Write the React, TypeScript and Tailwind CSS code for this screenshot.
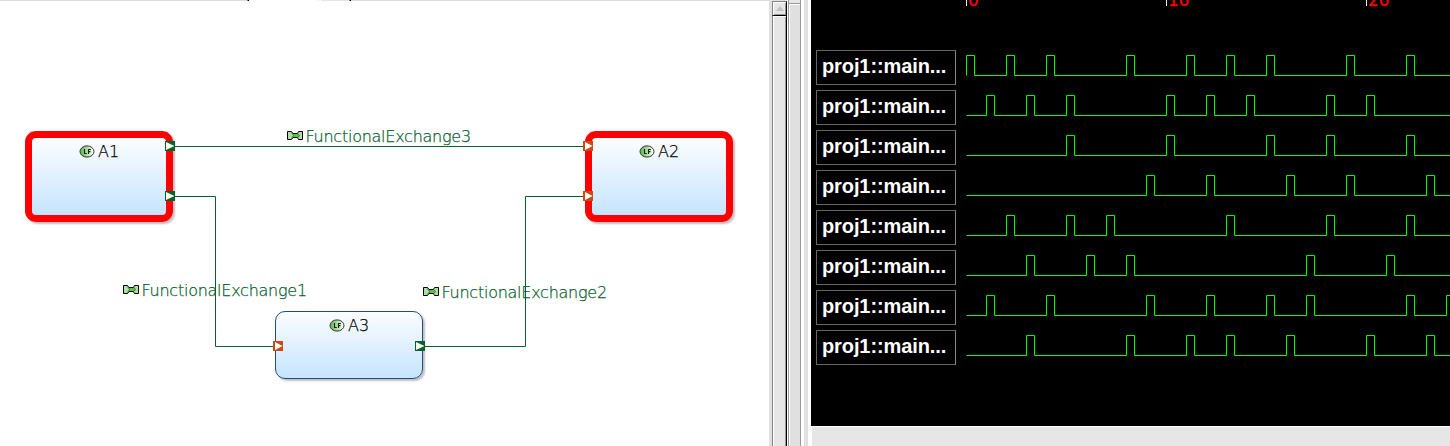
import React from "react";

const TICK = 20;

const signals: number[][] = [
  [0, 2, 4, 8, 11, 13, 15, 19, 22],
  [1, 3, 5, 10, 12, 14, 18, 20],
  [5, 10, 15, 18, 22],
  [9, 12, 16, 19, 23],
  [2, 5, 7, 13, 18, 22],
  [3, 6, 8, 17, 21],
  [1, 4, 9, 12, 15, 17, 22, 24],
  [3, 8, 11, 13, 16, 20, 23],
];

function wavePath(pulses: number[]) {
  let d = "M0.5 25.5";
  for (const p of pulses) {
    const x = p * TICK + 0.5;
    d += `H${x}V5.5H${x + 8}V25.5`;
  }
  return d + "H490";
}

function FunctionIcon() {
  return (
    <svg width="16" height="13" viewBox="0 0 16 13">
      <defs>
        <linearGradient id="fn" x1="0" x2="1" y1="0" y2="0">
          <stop offset="0.1" stopColor="#6cbb58" />
          <stop offset="0.9" stopColor="#f1faee" />
        </linearGradient>
      </defs>
      <ellipse cx="8" cy="6.5" rx="7" ry="5.6" fill="url(#fn)" stroke="#2b3428" strokeWidth="1" />
      <path d="M5.5 4V8.5H7.8M9.5 9V4.5H11.9M9.5 6.6H11.5" fill="none" stroke="#1a1f18" strokeWidth="1.1" />
    </svg>
  );
}

function ExchangeIcon() {
  return (
    <svg width="16" height="9" viewBox="0 0 16 9">
      <path d="M0.5 0.5H4.5L6 2.5H10.5L11.5 0.5H15.5V8.5H11.5L10.5 6.5H6L4.5 8.5H0.5Z" fill="#b0dea8" />
      <path d="M5 2.5H11L12.5 4.5L11 6.5H5L6.5 4.5Z" fill="#5cc340" />
      <path
        d="M0.5 0.5H4.5L6 2.5H10.5L11.5 0.5H15.5V8.5H11.5L10.5 6.5H6L4.5 8.5H0.5Z"
        fill="none"
        stroke="#000"
      />
      <path d="M4.5 1.5L6.5 4.5L4.5 7.5M11 2.5L12.5 4.5L11 6.5" fill="none" stroke="#2a4f24" strokeWidth="0.7" />
    </svg>
  );
}

function Port({ kind, place }: { kind: "in" | "out"; place: string }) {
  return (
    <svg className={`absolute ${place}`} width="10" height="10" viewBox="0 0 10 10">
      <rect width="10" height="10" fill={kind === "in" ? "#cb4a12" : "#09602f"} />
      {kind === "in" ? (
        <path d="M2 1V9L9.5 5Z" fill="#fff" />
      ) : (
        <path d="M1 1V9L9 5.3V4.7Z" fill="#f8ffe9" />
      )}
    </svg>
  );
}

function Node({ name, place }: { name: string; place: string }) {
  return (
    <div
      className={`absolute flex w-[148px] items-start justify-center bg-linear-to-b from-[#fcfdff] to-[#c6e4ff] shadow-[2px_2px_2px_rgba(70,70,90,0.35)] ${place}`}
    >
      <div className="flex h-[26px] items-center gap-[3px] text-[16px] font-extralight text-black [-webkit-text-stroke:0.25px_black]">
        <FunctionIcon />
        <span className="pt-[2px] leading-[18px]">{name}</span>
      </div>
    </div>
  );
}

function ExchangeLabel({ name, place }: { name: string; place: string }) {
  return (
    <div className={`absolute flex h-[20px] items-start gap-[2.5px] text-[16px] font-extralight text-[#09602f] [-webkit-text-stroke:0.25px_#09602f] ${place}`}>
      <div className="pt-[5px]">
        <ExchangeIcon />
      </div>
      <span className="whitespace-nowrap pt-px leading-[20px] tracking-[-0.25px]">{name}</span>
    </div>
  );
}

function Diagram() {
  return (
    <div className="relative h-[446px] w-[769px] shrink-0 overflow-hidden bg-white font-['DejaVu_Sans',sans-serif]">
      <div className="flex h-px">
        <div className="w-[247px] bg-[#dedede]" />
        <div className="w-px bg-[#777]" />
        <div className="w-px bg-black" />
        <div className="w-[69px] bg-white" />
        <div className="w-px bg-[#dedede]" />
        <div className="w-[2px] bg-white" />
        <div className="w-[28px] bg-[#e6e6e6]" />
        <div className="w-px bg-[#777]" />
        <div className="w-px bg-black" />
        <div className="flex-1 bg-[#dedede]" />
      </div>
      <Node name="A1" place="left-[25px] top-[131px] h-[91px] rounded-[11px] border-[7px] border-[#ff0000]" />
      <Node name="A2" place="left-[585px] top-[131px] h-[91px] rounded-[11px] border-[7px] border-[#ff0000]" />
      <Node name="A3" place="left-[275px] top-[311px] h-[68px] rounded-[10px] border border-[#234b7c]" />
      <svg className="absolute left-0 top-0" width="769" height="446" viewBox="0 0 769 446">
        <path d="M175 146.5H584M175 196.5H215.5V346.5H274M425 346.5H525.5V196.5H584" fill="none" stroke="#09602f" />
      </svg>
      <Port kind="out" place="left-[165px] top-[141px]" />
      <Port kind="out" place="left-[165px] top-[191px]" />
      <Port kind="in" place="left-[583px] top-[141px]" />
      <Port kind="in" place="left-[583px] top-[191px]" />
      <Port kind="in" place="left-[273px] top-[341px]" />
      <Port kind="out" place="left-[415px] top-[341px]" />
      <ExchangeLabel name="FunctionalExchange3" place="left-[287px] top-[126px]" />
      <ExchangeLabel name="FunctionalExchange1" place="left-[123px] top-[280px]" />
      <ExchangeLabel name="FunctionalExchange2" place="left-[423px] top-[282px]" />
    </div>
  );
}

function Scrollbars() {
  return (
    <div className="flex h-[446px] w-[42px] shrink-0 bg-white">
      <div className="w-[3px] bg-[#e0e0e0]" />
      <div className="flex w-[15px] flex-col bg-[#e0e0e0] pt-px">
        <div className="flex h-[15px] items-center justify-center border-b border-l border-r border-t border-b-black border-l-[#858585] border-r-black border-t-[#858585] bg-[#e6e6e6] shadow-[inset_1px_1px_0_#fff,inset_-1px_-1px_0_#999]">
          <svg width="8" height="5" viewBox="0 0 8 5">
            <path d="M4 0L8 5H0Z" fill="#c3c3c3" />
          </svg>
        </div>
        <div className="flex-1 border-l border-r border-l-[#858585] border-r-black bg-[#e6e6e6] shadow-[inset_1px_1px_0_#fff,inset_-1px_0_0_#999]" />
      </div>
      <div className="w-px bg-white" />
      <div className="flex w-[13px] flex-col border-l border-r border-l-[#999] border-r-[#999] bg-[#e0e0e0]">
        <div className="h-[4px] border-b border-[#999] bg-[#e6e6e6]" />
        <div className="flex-1 shadow-[inset_1px_1px_0_#fff]" />
      </div>
      <div className="w-[3px] bg-white" />
      <div className="w-[4px] bg-[#e2e2e2]" />
    </div>
  );
}

function AxisMark({ value }: { value: number }) {
  return (
    <div className="flex h-[6px] w-[200px] shrink-0 items-end">
      <div className="h-full w-px bg-white" />
      <span className="ml-px font-['DejaVu_Sans',sans-serif] text-[17px] leading-[12px] text-[#ff0000] [-webkit-text-stroke:0.3px_#ff0000]">
        {value}
      </span>
    </div>
  );
}

function Waveforms() {
  return (
    <div className="flex h-[446px] min-w-0 flex-1 flex-col">
      <div className="flex h-[426px] flex-col overflow-hidden bg-black">
        <div className="flex h-[50px] shrink-0 items-start overflow-hidden pl-[155px]">
          <AxisMark value={0} />
          <AxisMark value={10} />
          <AxisMark value={20} />
        </div>
        <div className="flex flex-col gap-[5px] pl-[5px]">
          {signals.map((pulses, i) => (
            <div key={i} className="flex h-[35px] gap-[10px]">
              <div className="flex w-[140px] shrink-0 items-center overflow-hidden whitespace-nowrap border border-[#666] border-r-[#888] pb-[4px] pl-[5px] font-['Liberation_Sans',sans-serif] text-[20px] font-bold leading-none tracking-[-0.1px] text-white">
                proj1::main...
              </div>
              <svg className="shrink-0" width="484" height="35" viewBox="0 0 484 35">
                <path d={wavePath(pulses)} fill="none" stroke="#00ff00" />
              </svg>
            </div>
          ))}
        </div>
      </div>
      <div className="flex-1 border-l border-t border-white bg-[#e6e6e6]" />
    </div>
  );
}

export default function App() {
  return (
    <div className="flex h-[446px] w-[1450px] overflow-hidden bg-white">
      <Diagram />
      <Scrollbars />
      <Waveforms />
    </div>
  );
}
